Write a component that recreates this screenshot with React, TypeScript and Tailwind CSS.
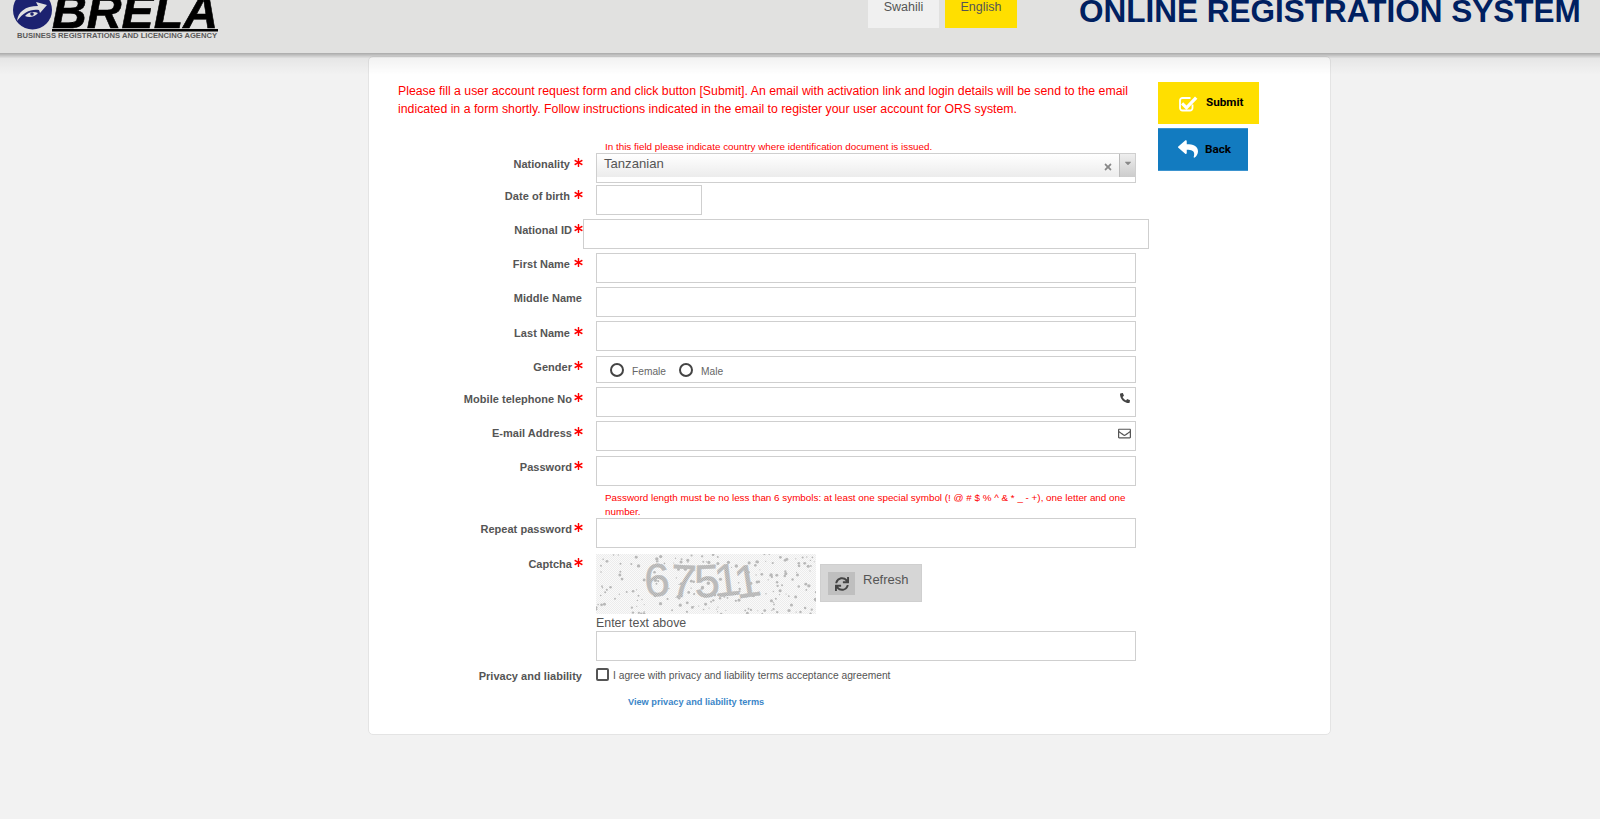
import { FaAsterisk, FaPhone, FaRegEnvelope, FaReply, FaSync, FaTimes, FaCaretDown } from 'react-icons/fa'

const fieldClass = 'block h-[30px] w-[540px] border border-[#cfcfcf] bg-white'
const labelClass = 'text-[11px] leading-[16px] font-bold tracking-[0.03px] text-[#555]'

function Star({ gap = 'ml-[2px]' }: { gap?: string }) {
  return <FaAsterisk className={`${gap} mt-[2px] shrink-0 text-[#ff0000]`} size={9} />
}

function Row({ label, gap, top = 'pt-[3px]', children }: { label: string; gap?: string; top?: string; children: React.ReactNode }) {
  return (
    <div className="flex">
      <div className={`flex h-fit w-[185px] shrink-0 items-start justify-end ${top}`}>
        <span className={labelClass}>{label}</span>
        <Star gap={gap} />
      </div>
      <div className="ml-[13px]">{children}</div>
    </div>
  )
}

function Captcha() {
  const dots: { x: number; y: number; r: number }[] = []
  let seed = 4711
  const next = () => {
    seed = (seed + 0x6d2b79f5) | 0
    let t = Math.imul(seed ^ (seed >>> 15), 1 | seed)
    t = (t + Math.imul(t ^ (t >>> 7), 61 | t)) ^ t
    return ((t ^ (t >>> 14)) >>> 0) / 4294967296
  }
  for (let i = 0; i < 210; i++) {
    dots.push({ x: next() * 220, y: next() * 60, r: 0.5 + next() * 1.2 })
  }
  return (
    <svg width="220" height="60" viewBox="0 0 220 60" className="block shrink-0">
      <defs>
        <pattern id="bg-dots" width="2" height="2" patternUnits="userSpaceOnUse">
          <rect width="2" height="2" fill="#fafafa" />
          <rect width="1" height="1" fill="#ececec" />
          <rect x="1" y="1" width="1" height="1" fill="#ececec" />
        </pattern>
        <pattern id="digit-dots" width="2" height="2" patternUnits="userSpaceOnUse">
          <rect width="2" height="2" fill="#d0d0d0" />
          <rect width="1" height="1" fill="#a6a6a6" />
          <rect x="1" y="1" width="1" height="1" fill="#a6a6a6" />
        </pattern>
      </defs>
      <rect width="220" height="60" fill="url(#bg-dots)" />
      {dots.map((d, i) => (
        <circle key={i} cx={d.x} cy={d.y} r={d.r} fill="#b8b8b8" />
      ))}
      <g fill="url(#digit-dots)" stroke="url(#digit-dots)" strokeWidth="0.5" fontFamily="'Liberation Sans', sans-serif" fontSize="46">
        <text x="48" y="42" transform="rotate(-3 60 25)">6</text>
        <text x="75" y="43" transform="rotate(3 88 25)">7</text>
        <text x="98" y="43" transform="rotate(-3 110 25)">5</text>
        <text x="118" y="42" transform="rotate(-7 130 25)">1</text>
        <text x="138" y="43" transform="rotate(-9 150 25)">1</text>
      </g>
    </svg>
  )
}

function Logo() {
  return (
    <svg width="230" height="53" viewBox="0 0 230 53" className="shrink-0">
      <circle cx="32.5" cy="10" r="19.5" fill="#1c2270" />
      <path d="M17 21c1-9 8-15 21-15l-2-4 11 3-7 8-1-3c-9-1-15 2-22 11z" fill="#e1e1e0" />
      <path d="M25 16c3-4 9-5 13-3-3 4-9 5-13 3z" fill="#e1e1e0" />
      <circle cx="32" cy="14" r="1.8" fill="#1c2270" />
      <text x="52" y="28" fontFamily="'Liberation Sans', sans-serif" fontWeight="700" fontStyle="italic" fontSize="48" fill="#000" stroke="#000" strokeWidth="0.6" textLength="166" lengthAdjust="spacingAndGlyphs">BRELA</text>
      <rect x="52" y="29" width="166" height="2.5" fill="#000" />
      <text x="17" y="38" fontFamily="'Liberation Sans', sans-serif" fontWeight="700" fontSize="6.5" fill="#5a5a5a" textLength="200" lengthAdjust="spacingAndGlyphs">BUSINESS REGISTRATIONS AND LICENCING AGENCY</text>
    </svg>
  )
}

export default function App() {
  return (
    <div className="min-h-screen bg-[#f2f2f2] font-['Liberation_Sans',sans-serif]">
      {/* Header */}
      <div className="relative z-10">
        <header className="flex h-[53px] items-start overflow-hidden bg-[#e1e1e0]">
          <Logo />
          <div className="ml-[638px] flex gap-[6px]">
            <a className="flex h-[28px] w-[71px] items-start justify-center bg-[#f0f0f0] text-[12.5px] leading-[14px] text-[#555]">Swahili</a>
            <a className="flex h-[28px] w-[72px] items-start justify-center bg-[#ffdf00] text-[12.5px] leading-[14px] text-[#555]">English</a>
          </div>
          <h1 className="ml-[62px] -mt-[8px] text-[31.5px] leading-[38px] font-bold whitespace-nowrap text-[#002060]">ONLINE REGISTRATION SYSTEM</h1>
        </header>
        <div className="pointer-events-none absolute top-full left-0 h-[22px] w-full bg-gradient-to-b from-black/30 via-black/5 via-[25%] to-transparent" />
      </div>

      {/* Card */}
      <div className="mt-[3px] ml-[368px] flex h-[679px] w-[963px] rounded-[5px] border border-[#e4e4e4] bg-white pl-[29px]">
        <div className="w-[760px] shrink-0 pt-[25px]">
          <p className="w-[735px] text-[12.3px] leading-[18px] text-[#ff0000]">
            Please fill a user account request form and click button [Submit]. An email with activation link and login details will be send to the email indicated in a form shortly. Follow instructions indicated in the email to register your user account for ORS system.
          </p>

          <p className="mt-[22px] ml-[207px] text-[9.85px] leading-[13px] text-[#ff0000]">In this field please indicate country where identification document is issued.</p>

          <Row label="Nationality" gap="ml-[4px]">
            <div className="relative h-[30px] w-[540px] border border-[#cfcfcf] bg-white">
              <div className="flex h-[23px] items-start bg-gradient-to-b from-white to-[#ececec] pl-[7px] text-[13.1px] leading-[20px] text-[#555]">Tanzanian</div>
              <FaTimes className="absolute top-[8px] right-[22px] text-[#888]" size={10} />
              <div className="absolute top-0 right-0 flex h-[23px] w-[16px] justify-center border-l border-[#bbb] bg-gradient-to-b from-[#eee] to-[#ccc]">
                <FaCaretDown className="mt-[4px] text-[#888]" size={10} />
              </div>
            </div>
          </Row>

          <div className="mt-[2px]">
            <Row label="Date of birth" gap="ml-[4px]">
              <div className={`${fieldClass} !w-[106px]`} />
            </Row>
          </div>

          <div className="mt-[4px] flex">
            <div className="flex w-[185px] shrink-0 items-start justify-end pt-[3px]">
              <span className={labelClass}>National ID</span>
              <Star />
            </div>
            <input className="block h-[30px] w-[566px] border border-[#cfcfcf] bg-white" />
          </div>

          <div className="mt-[4px] flex flex-col gap-[4px]">
            <Row label="First Name" gap="ml-[4px]"><input className={fieldClass} /></Row>
            <div className="flex">
              <div className={`w-[185px] shrink-0 pt-[3px] pr-[1px] text-right ${labelClass}`}>Middle Name</div>
              <input className={`ml-[13px] ${fieldClass}`} />
            </div>
            <Row label="Last Name" gap="ml-[4px]" top="pt-[4px]"><input className={fieldClass} /></Row>
            <div className="mt-[1px]">
              <Row label="Gender" top="pt-[3px]">
                <div className="flex h-[27px] w-[540px] items-center border border-[#cfcfcf] bg-white pl-[13px]">
                  <input type="radio" name="gender" className="h-[14px] w-[14px] appearance-none rounded-full border-2 border-[#444]" />
                  <span className="mt-[4px] ml-[8px] text-[10.2px] text-[#666]">Female</span>
                  <input type="radio" name="gender" className="ml-[13px] h-[14px] w-[14px] appearance-none rounded-full border-2 border-[#444]" />
                  <span className="mt-[4px] ml-[8px] text-[10.2px] text-[#666]">Male</span>
                </div>
              </Row>
            </div>
            <Row label="Mobile telephone No" top="pt-[4px]">
              <div className="relative">
                <input className={fieldClass} />
                <FaPhone className="absolute top-[6px] right-[6px] -scale-x-100 text-[#444]" size={10} />
              </div>
            </Row>
            <Row label="E-mail Address" top="pt-[4px]">
              <div className="relative">
                <input className={fieldClass} />
                <FaRegEnvelope className="absolute top-[6px] right-[5px] text-[#555]" size={13} />
              </div>
            </Row>
          </div>

          <div className="mt-[5px]">
            <Row label="Password"><input className={fieldClass} /></Row>
          </div>
          <p className="mt-[5px] ml-[207px] w-[530px] text-[9.85px] leading-[13.5px] text-[#ff0000]">
            Password length must be no less than 6 symbols: at least one special symbol (! @ # $ % ^ &amp; * _ - +), one letter and one number.
          </p>
          <Row label="Repeat password"><input className={fieldClass} /></Row>

          <div className="mt-[6px]">
            <Row label="Captcha" top="pt-[2px]">
              <div className="flex">
                <Captcha />
                <button className="mt-[10px] ml-[4px] flex h-[38px] w-[102px] items-start border border-[#cfcfcf] bg-[#d6d6d6] pt-[7px] pl-[7px] text-[13px] text-[#555]">
                  <span className="flex h-[23px] w-[27px] items-center justify-center bg-[#bfbfbf]">
                    <FaSync className="text-[#444]" size={14} />
                  </span>
                  <span className="mt-[1px] ml-[8px] leading-[14px]">Refresh</span>
                </button>
              </div>
              <div className="h-[17px] text-[12.4px] leading-[18px] text-[#555]">Enter text above</div>
              <input className={fieldClass} />
            </Row>
          </div>

          <div className="mt-[7px] flex">
            <div className={`w-[185px] shrink-0 pr-[1px] text-right ${labelClass}`}>Privacy and liability</div>
            <div className="ml-[13px]">
              <label className="flex items-start">
                <input type="checkbox" className="h-[13px] w-[13px] appearance-none rounded-[2px] border-2 border-[#555]" />
                <span className="ml-[4px] text-[10.25px] leading-[16px] text-[#555]">I agree with privacy and liability terms acceptance agreement</span>
              </label>
              <a className="mt-[11px] ml-[32px] block text-[9.2px] leading-[14px] font-bold text-[#3b86c8]">View privacy and liability terms</a>
            </div>
          </div>
        </div>

        <div className="flex flex-col items-start gap-[4px] pt-[25px] font-['Roboto',sans-serif] text-[11.7px] font-bold text-black">
          <button className="flex h-[42px] w-[101px] items-center bg-[#ffdf00] pl-[21px]">
            <svg width="19" height="17" viewBox="0 0 19 17" className="shrink-0">
              <path d="M13.5 9.5V13a2.5 2.5 0 0 1-2.5 2.5H3.5A2.5 2.5 0 0 1 1 13V5.5A2.5 2.5 0 0 1 3.5 3h8" fill="none" stroke="#fff" strokeWidth="1.8" />
              <path d="M4.2 7.2 7.5 10.5 16 1.5l2.4 2.3L7.5 15 2 9.5z" fill="#fff" />
            </svg>
            <span className="ml-[8px]">Submit</span>
          </button>
          <button className="flex h-[43px] w-[90px] items-center border-y border-[#3b93cf] bg-[#127bc0] pl-[20px]">
            <FaReply className="-mt-[2px] text-white" size={20} />
            <span className="ml-[7px]">Back</span>
          </button>
        </div>
      </div>
    </div>
  )
}
